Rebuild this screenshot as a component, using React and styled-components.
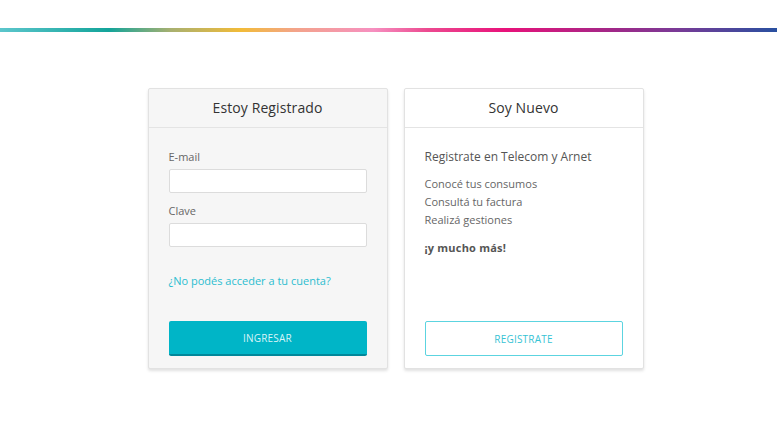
import React from "react";
import styled, { createGlobalStyle } from "styled-components";

const Global = createGlobalStyle`
  html, body { margin: 0; padding: 0; background: #fff; }
  body { font-family: "Open Sans", "Noto Sans", sans-serif; color: #555; }
  * { box-sizing: border-box; }
`;

const Page = styled.div`
  width: 777px;
  height: 423px;
  display: flex;
  flex-direction: column;
  overflow: hidden;
`;

const ColorBar = styled.div`
  margin-top: 28px;
  height: 4px;
  background: linear-gradient(
    90deg,
    #5cc6cc 0%,
    #13a49a 14%,
    #a8b070 22%,
    #f2bb38 31%,
    #f3a48a 38%,
    #f690c0 48%,
    #ec4a90 55%,
    #e8127a 65%,
    #a02888 79%,
    #7a3a96 87%,
    #2850a0 100%
  );
`;

const Cards = styled.div`
  margin-top: 56px;
  display: flex;
  justify-content: center;
  gap: 16px;
  padding-left: 14px;
`;

const Card = styled.div`
  width: 240px;
  height: 281px;
  display: flex;
  flex-direction: column;
  background: ${(p) => (p.$muted ? "#f6f6f6" : "#ffffff")};
  border: 1px solid #e2e2e2;
  border-radius: 2px;
  box-shadow: 0 2px 3px rgba(0, 0, 0, 0.12);
`;

const CardHeader = styled.div`
  height: 39px;
  flex: none;
  display: flex;
  align-items: center;
  justify-content: center;
  border-bottom: 1px solid #e4e4e4;
  font-size: 14px;
  color: #333;
  letter-spacing: 0.1px;
  padding-bottom: 1px;
`;

const CardBody = styled.div`
  flex: 1;
  display: flex;
  flex-direction: column;
  padding: 22px 20px 12px 20px;
`;

const Label = styled.label`
  font-size: 11px;
  line-height: 14px;
  color: #666;
  margin-bottom: 5px;
`;

const Input = styled.input`
  height: 24px;
  width: 100%;
  border: 1px solid #dcdcdc;
  border-radius: 2px;
  background: #fff;
  margin-bottom: ${(p) => p.$gap || 0}px;
  font-family: inherit;
  outline: none;
`;

const Link = styled.a`
  margin-top: 27px;
  font-size: 11px;
  line-height: 14px;
  color: #2bbdd0;
  text-decoration: none;
`;

const PrimaryButton = styled.button`
  margin-top: auto;
  height: 35px;
  width: 100%;
  border: none;
  border-bottom: 2px solid #00879a;
  border-radius: 2px;
  background: #00b5c7;
  color: #d8f4f8;
  font-family: inherit;
  font-size: 10px;
  letter-spacing: 0.2px;
`;

const OutlineButton = styled.button`
  margin-top: auto;
  height: 35px;
  width: 100%;
  border: 1px solid #5cd4e0;
  border-radius: 2px;
  background: #fff;
  color: #36c3d4;
  font-family: inherit;
  font-size: 10px;
  letter-spacing: 0.2px;
`;

const Lead = styled.p`
  margin: 0 0 11px 0;
  font-size: 12px;
  line-height: 14px;
  color: #555;
`;

const List = styled.ul`
  list-style: none;
  margin: 0;
  padding: 0;
`;

const Item = styled.li`
  font-size: 11px;
  line-height: 18px;
  color: #666;
`;

const Strong = styled.p`
  margin: 12px 0 0 0;
  font-size: 11px;
  line-height: 14px;
  font-weight: 700;
  color: #555;
  letter-spacing: 0.2px;
`;

export default function App() {
  return (
    <Page>
      <Global />
      <ColorBar />
      <Cards>
        <Card $muted>
          <CardHeader>Estoy Registrado</CardHeader>
          <CardBody>
            <Label>E-mail</Label>
            <Input type="text" $gap={11} />
            <Label>Clave</Label>
            <Input type="password" />
            <Link href="#">¿No podés acceder a tu cuenta?</Link>
            <PrimaryButton>INGRESAR</PrimaryButton>
          </CardBody>
        </Card>
        <Card>
          <CardHeader>Soy Nuevo</CardHeader>
          <CardBody>
            <Lead>Registrate en Telecom y Arnet</Lead>
            <List>
              <Item>Conocé tus consumos</Item>
              <Item>Consultá tu factura</Item>
              <Item>Realizá gestiones</Item>
            </List>
            <Strong>¡y mucho más!</Strong>
            <OutlineButton>REGISTRATE</OutlineButton>
          </CardBody>
        </Card>
      </Cards>
    </Page>
  );
}
